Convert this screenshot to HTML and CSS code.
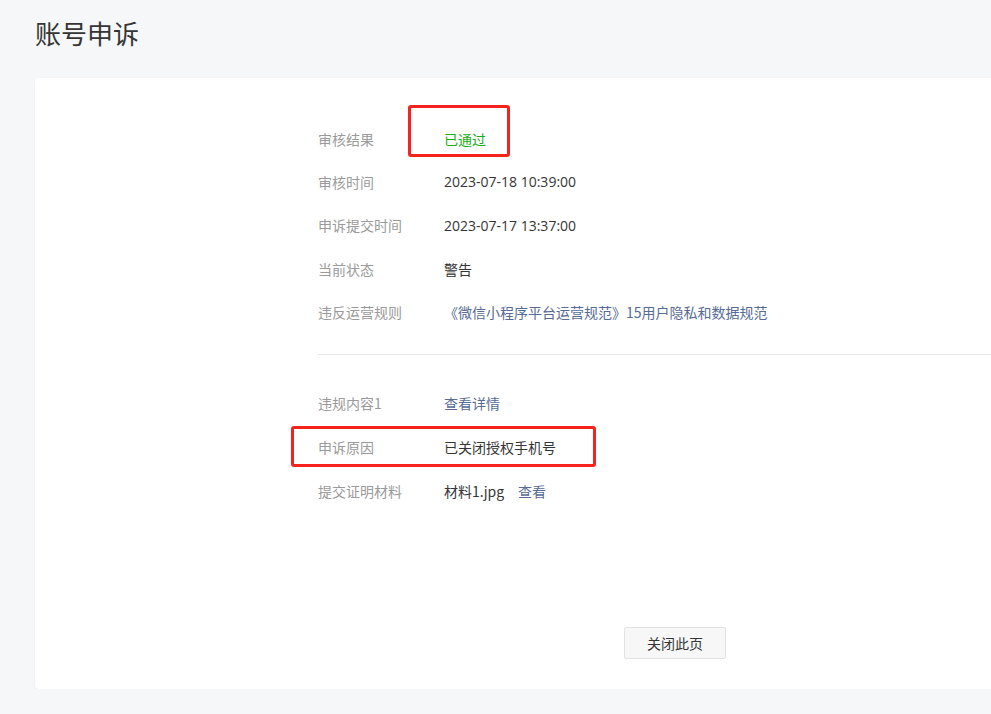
FILE: index.html
```html
<!DOCTYPE html>
<html lang="zh-CN">
<head>
<meta charset="utf-8">
<title>账号申诉</title>
<link rel="stylesheet" href="styles.css">
</head>
<body>
<div class="page">
  <h1 class="page-title">账号申诉</h1>
  <div class="card">
    <div class="content">
      <div class="group">
        <div class="row">
          <span class="label">审核结果</span>
          <span class="value success">已通过</span>
          <span class="mark mark-result"></span>
        </div>
        <div class="row">
          <span class="label">审核时间</span>
          <span class="value date">2023-07-18 10:39:00</span>
        </div>
        <div class="row">
          <span class="label">申诉提交时间</span>
          <span class="value date">2023-07-17 13:37:00</span>
        </div>
        <div class="row">
          <span class="label">当前状态</span>
          <span class="value">警告</span>
        </div>
        <div class="row">
          <span class="label">违反运营规则</span>
          <span class="value link">《微信小程序平台运营规范》15用户隐私和数据规范</span>
        </div>
      </div>
      <div class="divider"></div>
      <div class="group group-second">
        <div class="row">
          <span class="label">违规内容1</span>
          <span class="value link">查看详情</span>
        </div>
        <div class="row">
          <span class="label">申诉原因</span>
          <span class="value">已关闭授权手机号</span>
          <span class="mark mark-reason"></span>
        </div>
        <div class="row">
          <span class="label">提交证明材料</span>
          <span class="value">材料1.jpg<span class="link file-link">查看</span></span>
        </div>
      </div>
      <div class="actions">
        <button class="btn">关闭此页</button>
      </div>
    </div>
  </div>
</div>
</body>
</html>
```
FILE: styles.css
```css
html, body {
  margin: 0;
  padding: 0;
  background: #f6f7f9;
  overflow: hidden;
}
body {
  font-family: "Noto Sans CJK SC", "Noto Sans", "Liberation Sans", sans-serif;
  color: #353535;
}
.page {
  padding: 14px 0 0 35px;
}
.page-title {
  margin: 0;
  font-size: 26px;
  font-weight: 400;
  line-height: 38px;
  color: #353535;
}
.card {
  margin-top: 26px;
  width: 1280px;
  height: 611px;
  box-sizing: border-box;
  background: #fff;
  border-radius: 4px;
  box-shadow: 0 1px 2px rgba(0,0,0,0.08);
  padding: 39px 0 30px 283px;
}
.content {
  display: flex;
  flex-direction: column;
}
.row {
  position: relative;
  display: flex;
  align-items: center;
  height: 43.3px;
  font-size: 14px;
}
.group-second .row {
  height: 44px;
}
.label {
  width: 126px;
  flex: none;
  color: #9a9a9a;
}
.value {
  color: #353535;
}
.date {
  font-family: "Open Sans", "Noto Sans CJK SC", sans-serif;
}
.success {
  color: #1aad19;
}
.link {
  color: #576b95;
}
.file-link {
  margin-left: 14px;
}
.divider {
  height: 1px;
  background: #e7e7e7;
  margin: 21px 0 26px;
}
.actions {
  margin-top: 114px;
  padding-left: 306px;
}
.btn {
  width: 102px;
  height: 32px;
  border: 1px solid #e2e2e2;
  border-radius: 2px;
  background: #f7f7f7;
  font-family: inherit;
  font-size: 14px;
  color: #353535;
  padding: 0;
}
.mark {
  position: absolute;
  border: 3px solid #f5231b;
  border-radius: 3px;
  box-sizing: border-box;
}
.mark-result {
  left: 90px;
  top: -12px;
  width: 102px;
  height: 52px;
}
.mark-reason {
  left: -27px;
  top: 1px;
  width: 305px;
  height: 41px;
}
```
